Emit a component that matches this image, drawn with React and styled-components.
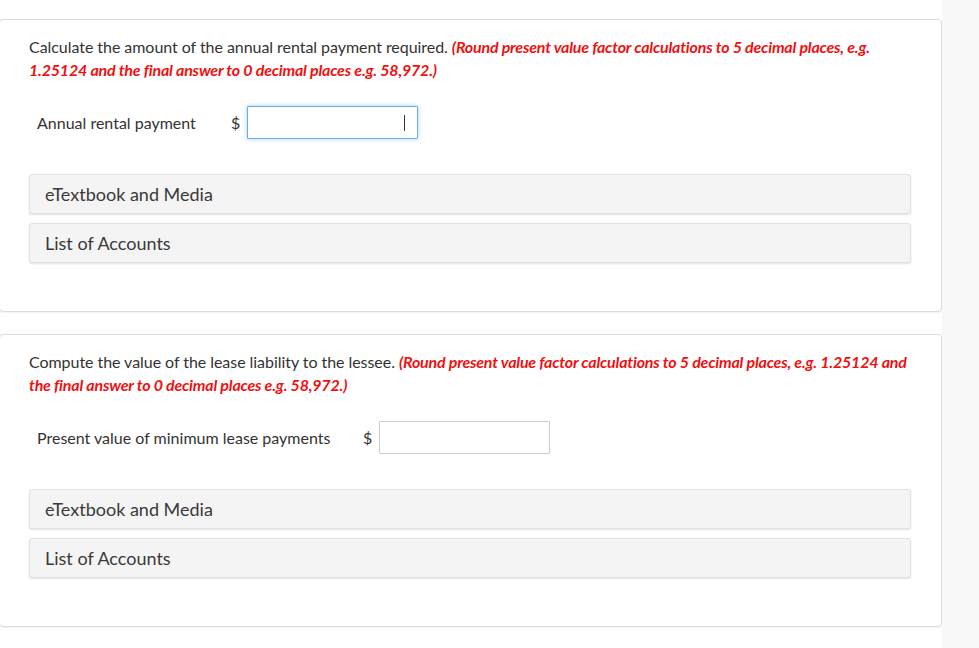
import React from 'react'
import styled, { createGlobalStyle } from 'styled-components'

const GlobalStyle = createGlobalStyle`
  html, body {
    margin: 0;
    padding: 0;
    background: #f8f8f8;
    font-family: Lato, "Open Sans", sans-serif;
    color: #333333;
  }
`;

function Question({ intro, hint, label, dollarGap, focused }) {
  return (
    <Card>
      <Prompt>
        {intro} <Hint>{hint}</Hint>
      </Prompt>
      <AnswerRow>
        <FieldLabel style={{ width: dollarGap }}>{label}</FieldLabel>
        <Dollar>$</Dollar>
        <AmountInput focused={focused}>{focused && <Caret />}</AmountInput>
      </AnswerRow>
      <Panels>
        <Panel>eTextbook and Media</Panel>
        <Panel>List of Accounts</Panel>
      </Panels>
    </Card>
  )
}

function App() {
  return (
    <Page>
      <GlobalStyle />
      <Column>
        <Question
          intro="Calculate the amount of the annual rental payment required."
          hint="(Round present value factor calculations to 5 decimal places, e.g. 1.25124 and the final answer to 0 decimal places e.g. 58,972.)"
          label="Annual rental payment"
          dollarGap={194}
          focused
        />
        <Question
          intro="Compute the value of the lease liability to the lessee."
          hint="(Round present value factor calculations to 5 decimal places, e.g. 1.25124 and the final answer to 0 decimal places e.g. 58,972.)"
          label="Present value of minimum lease payments"
          dollarGap={326}
        />
      </Column>
    </Page>
  )
}

const Page = styled.div`
  width: 979px;
  height: 648px;
  overflow: hidden;
  display: flex;
`;

const Column = styled.div`
  width: 943px;
  background: #ffffff;
  padding-top: 19px;
  display: flex;
  flex-direction: column;
  gap: 22px;
  margin-left: -1px;
`;

const Card = styled.div`
  border: 1px solid #dcdcdc;
  border-radius: 4px;
  padding: 15px 30px 48px 29px;
  box-shadow: 0 1px 1px rgba(0, 0, 0, 0.05);
  background: #ffffff;
`;

const Prompt = styled.p`
  margin: 0;
  font-size: 16px;
  line-height: 23px;
  color: #333333;
  letter-spacing: -0.05px;
`;

const Hint = styled.span`
  color: #ee1111;
  font-weight: 700;
  font-style: italic;
  letter-spacing: -0.2px;
`;

const AnswerRow = styled.div`
  display: flex;
  align-items: center;
  margin-top: 25px;
  padding-left: 8px;
`;

const FieldLabel = styled.span`
  font-size: 16px;
  color: #333333;
`;

const Dollar = styled.span`
  font-size: 16px;
  color: #333333;
  width: 16px;
`;

const AmountInput = styled.div`
  width: 171px;
  height: 33px;
  box-sizing: border-box;
  border: 1px solid ${p => (p.focused ? '#66afe9' : '#cccccc')};
  box-shadow: ${p => (p.focused ? '0 0 4px rgba(102, 175, 233, 0.6)' : 'none')};
  border-radius: 1px;
  display: flex;
  align-items: center;
  justify-content: flex-end;
  padding-right: 12px;
  background: #ffffff;
`;

const Caret = styled.span`
  width: 1px;
  height: 16px;
  background: #333333;
`;

const Panels = styled.div`
  display: flex;
  flex-direction: column;
  gap: 9px;
  margin-top: 35px;
`;

const Panel = styled.div`
  height: 40px;
  box-sizing: border-box;
  border: 1px solid #e2e2e2;
  border-radius: 3px;
  background: #f4f4f4;
  box-shadow: 0 1px 2px rgba(0, 0, 0, 0.12);
  padding-left: 15px;
  display: flex;
  align-items: center;
  font-size: 18px;
  color: #3a3a3a;
`;

export default App
